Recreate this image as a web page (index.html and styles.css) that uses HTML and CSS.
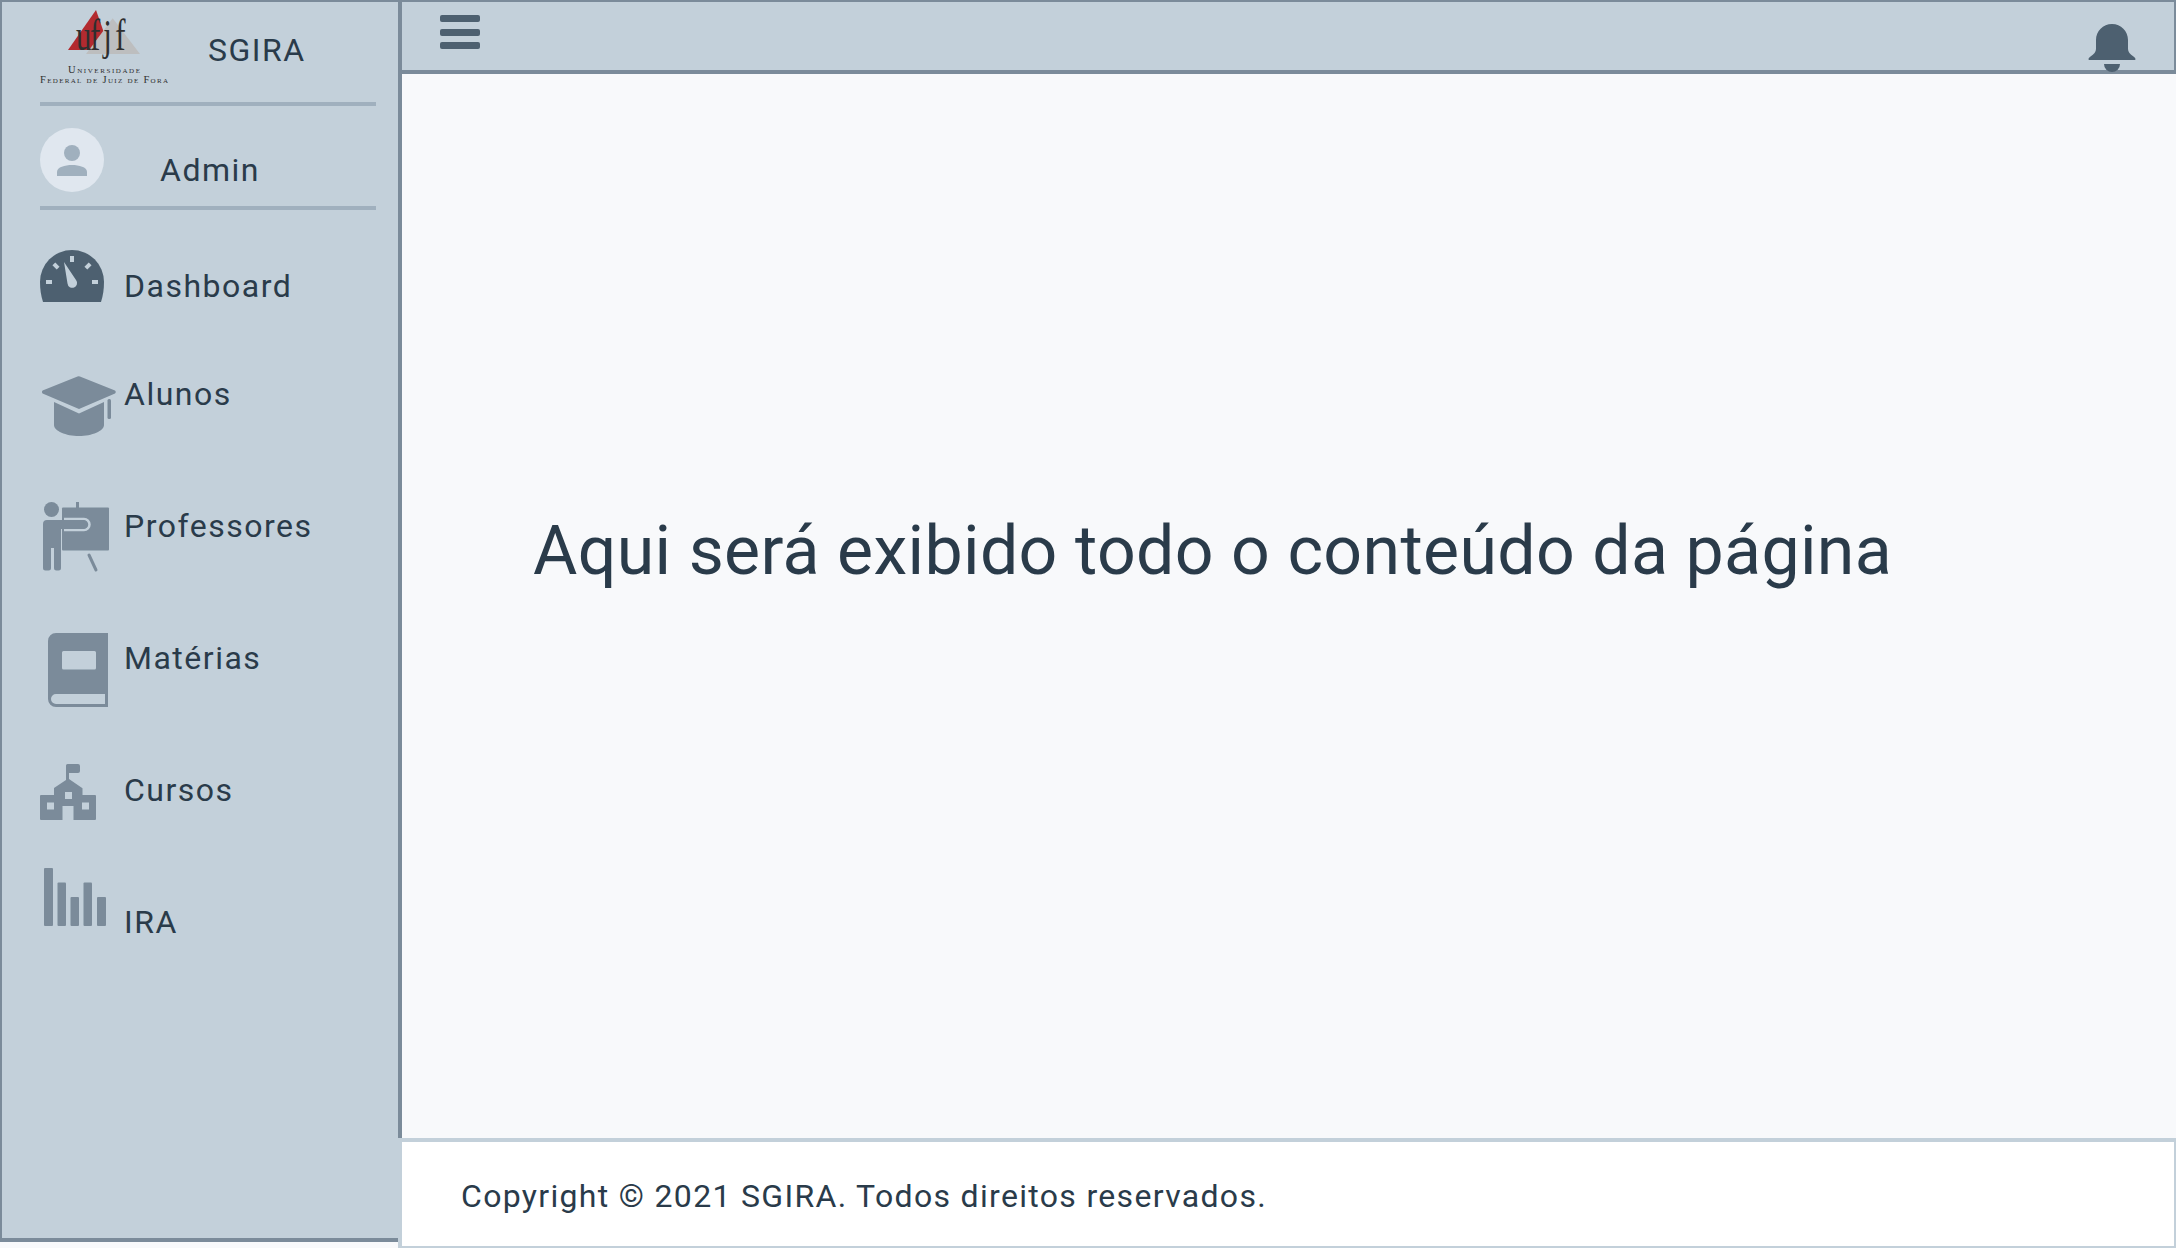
FILE: index.html
```html
<!DOCTYPE html>
<html lang="pt-BR">
<head>
<meta charset="utf-8">
<title>SGIRA</title>
<link rel="stylesheet" href="styles.css">
</head>
<body>
<div class="app">
  <aside class="sidebar">
    <div class="brand">
      <svg class="logo" viewBox="0 0 128 74" width="128" height="74">
        <polygon class="logo-red" points="56,0 28,40 70,40"/>
        <polygon class="logo-grey" points="72.7,8.3 46,44 100,44"/>
        <text class="logo-mark" transform="translate(36 40) scale(.7 1)" x="0 20 39 56" y="0">ufjf</text>
        <text class="logo-small" x="28" y="63" textLength="72">Universidade</text>
        <text class="logo-small" x="0" y="73" textLength="128">Federal de Juiz de Fora</text>
      </svg>
      <span class="brand-name">SGIRA</span>
    </div>
    <div class="user">
      <svg class="avatar" viewBox="0 0 64 64" width="64" height="64">
        <circle class="avatar-bg" cx="32" cy="32" r="32"/>
        <circle class="avatar-fg" cx="32" cy="25" r="8"/>
        <path class="avatar-fg" d="M17 48v-4c0-5 8-7 15-7s15 2 15 7v4z"/>
      </svg>
      <span class="user-name">Admin</span>
    </div>
    <nav class="nav">
      <a class="nav-item nav-item-first">
        <span class="nav-icon icon-gauge">
          <svg viewBox="0 0 64 52" width="64" height="52">
            <path class="ic-dark" d="M32 0a32 32 0 0 1 32 32c0 7-1 14-3 20H3C1 46 0 39 0 32A32 32 0 0 1 32 0z"/>
            <rect class="ic-light" x="30" y="6" width="4" height="6"/>
            <rect class="ic-light" x="6" y="30" width="6" height="4"/>
            <rect class="ic-light" x="52" y="30" width="6" height="4"/>
            <rect class="ic-light" x="13" y="14" width="6" height="4" transform="rotate(45 16 16)"/>
            <rect class="ic-light" x="45" y="14" width="6" height="4" transform="rotate(-45 48 16)"/>
            <path class="ic-light" d="M24 12l12 18a4.800 4.800 0 1 1-8.500 3.500z"/>
          </svg>
        </span>
        <span class="nav-label">Dashboard</span>
      </a>
      <a class="nav-item">
        <span class="nav-icon icon-cap">
          <svg viewBox="0 0 76 60" width="76" height="60">
            <path class="ic-mid" d="M36.500.4a3 3 0 0 1 2.400 0L74 14.500q1.500 1.500 0 3L38 33 1.600 17.500q-1.300-1.500 0-3z"/>
            <path class="ic-mid" d="M13 26l25 11.500L63 26v23c0 6-12 11-25 11S13 55 13 49z"/>
            <rect class="ic-mid" x="66.500" y="23" width="3.500" height="20" rx="1.500"/>
          </svg>
        </span>
        <span class="nav-label">Alunos</span>
      </a>
      <a class="nav-item">
        <span class="nav-icon icon-prof">
          <svg viewBox="0 0 68 70" width="68" height="70">
            <rect class="ic-mid" x="33" y="0" width="3" height="8"/>
            <rect class="ic-mid" x="19" y="5.500" width="47" height="43" rx="1"/>
            <path class="ic-light-stroke" d="M21 17h20a5.500 5.500 0 0 1 0 11H21"/>
            <circle class="ic-mid" cx="8.500" cy="7.500" r="7.500"/>
            <path class="ic-mid" d="M4 18h36a4.500 4.500 0 0 1 0 9H18v39a2.500 2.500 0 0 1-2.500 2.500h-2A2.500 2.500 0 0 1 11 66V46H8v20a2.500 2.500 0 0 1-2.500 2.500h-3A2.500 2.500 0 0 1 0 66V22a4 4 0 0 1 4-4z"/>
            <path class="ic-line" d="M46 53l7 15"/>
          </svg>
        </span>
        <span class="nav-label">Professores</span>
      </a>
      <a class="nav-item">
        <span class="nav-icon icon-book">
          <svg viewBox="0 0 60 74" width="60" height="74">
            <path class="ic-mid" fill-rule="evenodd" d="M8 0h52v74H8a8 8 0 0 1-8-8V8a8 8 0 0 1 8-8zM15.500 18a1.500 1.500 0 0 0-1.500 1.500V35a1.500 1.500 0 0 0 1.500 1.500h31A1.500 1.500 0 0 0 48 35V19.500a1.500 1.500 0 0 0-1.500-1.500zM8 61a5 5 0 0 0 0 10h49V61z"/>
          </svg>
        </span>
        <span class="nav-label">Matérias</span>
      </a>
      <a class="nav-item">
        <span class="nav-icon icon-school">
          <svg viewBox="0 0 56 58" width="56" height="58">
            <path class="ic-mid" fill-rule="evenodd" d="M26 2.500A1.500 1.500 0 0 1 27.500 1H38a2 2 0 0 1 2 2v5a2 2 0 0 1-2 2H29v6l13.500 9.300V32H55a1 1 0 0 1 1 1v23a1 1 0 0 1-1 1H33.500V43h-11v14H1a1 1 0 0 1-1-1V33a1 1 0 0 1 1-1h13v-7L26 17zM25 29v7h7v-7zM7 39.500v7h7v-7zM42 39.500v7h7v-7z"/>
          </svg>
        </span>
        <span class="nav-label">Cursos</span>
      </a>
      <a class="nav-item">
        <span class="nav-icon icon-bars">
          <svg viewBox="0 0 62 58" width="62" height="58">
            <rect class="ic-mid" x="0" y="0" width="9" height="58" rx="1"/>
            <rect class="ic-mid" x="13.500" y="14.500" width="8.500" height="43.500" rx="1"/>
            <rect class="ic-mid" x="26.500" y="29" width="8.500" height="29" rx="1"/>
            <rect class="ic-mid" x="39.500" y="14.500" width="8.500" height="43.500" rx="1"/>
            <rect class="ic-mid" x="53" y="29" width="9" height="29" rx="1"/>
          </svg>
        </span>
        <span class="nav-label">IRA</span>
      </a>
    </nav>
  </aside>
  <div class="content">
    <header class="topbar">
      <button class="menu-btn" type="button" aria-label="Menu">
        <span class="menu-line"></span>
        <span class="menu-line"></span>
        <span class="menu-line"></span>
      </button>
      <svg class="bell" viewBox="0 0 48 48" width="48" height="48">
        <path class="ic-dark" d="M24 0c9 0 16 7 16 16v9c0 3 2 5 5.500 7.500 2 1.500 3 3.500.5 3.500H2C-.5 36 .5 34 2.500 32.500 6 30 8 28 8 25v-9C8 7 15 0 24 0z"/>
        <path class="ic-dark" d="M16 40h16a8 8 0 0 1-16 0z"/>
      </svg>
    </header>
    <main class="page">
      <h1 class="page-title">Aqui será exibido todo o conteúdo da página</h1>
    </main>
    <footer class="footer">Copyright © 2021 SGIRA. Todos direitos reservados.</footer>
  </div>
</div>
</body>
</html>
```
FILE: styles.css
```css
* { box-sizing: border-box; }
html, body { margin: 0; height: 100%; }
body {
  background: #f8f9fb;
  color: #2a3b4a;
  font-family: Roboto, "Noto Sans", sans-serif;
  overflow: hidden;
}
svg { display: block; }

.app { display: flex; height: 1248px; }

.sidebar {
  flex: 0 0 402px;
  height: 1242px;
  background: #c3d0da;
  border: solid #7b8b9a;
  border-width: 2px 4px 4px 2px;
  padding-left: 38px;
}

.brand {
  display: flex;
  width: 336px;
  height: 104px;
  border-bottom: 4px solid #a0b0be;
}
.logo { margin-top: 8px; flex: none; }
.logo-red { fill: #b32a2f; }
.logo-grey { fill: #bdbebf; }
.logo-mark { font: 44px "Liberation Serif", serif; fill: #2f2f2f; }
.logo-small { font: 10.5px "Liberation Serif", serif; font-variant: small-caps; fill: #2f2f2f; }
.brand-name {
  margin: 28px 0 0 40px;
  font-size: 32px;
  line-height: 40px;
  letter-spacing: 1.5px;
}

.user {
  display: flex;
  width: 336px;
  height: 104px;
  padding-top: 22px;
  border-bottom: 4px solid #a0b0be;
}
.avatar { flex: none; }
.avatar-bg { fill: #e0e7ef; }
.avatar-fg { fill: #a0b0be; }
.user-name {
  margin: 22px 0 0 56px;
  font-size: 32px;
  line-height: 40px;
  letter-spacing: 1.5px;
}

.nav { margin-top: 22px; }
.nav-item { display: flex; height: 132px; }
.nav-item-first { height: 108px; }
.nav-icon { flex: 0 0 84px; }
.nav-label {
  margin-top: 34px;
  font-size: 32px;
  line-height: 40px;
  letter-spacing: 1.5px;
}
.icon-gauge svg { margin-top: 18px; }
.icon-cap svg { margin: 36px 0 0 1px; }
.icon-prof svg { margin: 30px 0 0 3px; }
.icon-book svg { margin: 29px 0 0 8px; }
.icon-school svg { margin-top: 27px; }
.icon-bars svg { margin: 0 0 0 4px; }

.ic-dark { fill: #4d6070; }
.ic-mid { fill: #7b8b9a; }
.ic-light { fill: #c3d0da; }
.ic-light-stroke { fill: none; stroke: #c3d0da; stroke-width: 2.500; }
.ic-line { fill: none; stroke: #7b8b9a; stroke-width: 3; stroke-linecap: round; }

.content { flex: 1; display: flex; flex-direction: column; min-width: 0; }

.topbar {
  flex: 0 0 74px;
  min-height: 0;
  display: flex;
  justify-content: space-between;
  background: #c3d0da;
  border: solid #7b8b9a;
  border-width: 2px 2px 4px 0;
  padding-right: 38px;
}
.menu-btn {
  display: flex;
  flex-direction: column;
  gap: 6.500px;
  width: 40px;
  height: 34px;
  margin: 13px 0 0 38px;
  padding: 0;
  border: 0;
  background: none;
}
.menu-line {
  display: block;
  width: 40px;
  height: 7px;
  border-radius: 2px;
  background: #4d6070;
}
.bell { margin: 22px 0 -2px; }

.page {
  flex: 1;
  display: flex;
  align-items: center;
  padding: 0 0 0 131px;
}
.page-title {
  margin: 0 0 110px;
  font-size: 68px;
  font-weight: 400;
  line-height: 84px;
  letter-spacing: 0.350px;
  white-space: nowrap;
}

.footer {
  position: relative;
  flex: 0 0 110px;
  margin-left: -4px;
  padding: 34px 0 0 59px;
  background: #fff;
  border: solid #c3d0da;
  border-width: 4px 2px 2px 4px;
  font-size: 32px;
  line-height: 40px;
  letter-spacing: 1.320px;
}
```
